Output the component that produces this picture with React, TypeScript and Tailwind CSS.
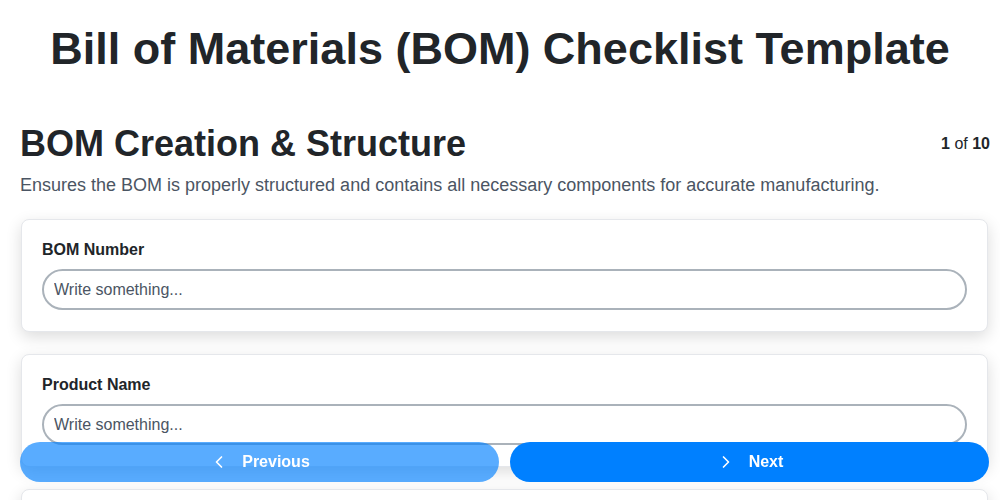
import { ChevronLeft, ChevronRight } from "lucide-react";

const fields = ["BOM Number", "Product Name", "Revision Level"];

function FieldCard({ label }: { label: string }) {
  return (
    <div className="bg-white border border-[#e5e7eb] rounded-lg px-5 pt-[22px] pb-[21px] shadow-[0_5px_16px_rgba(0,0,0,0.14)]">
      <label className="block text-base font-bold leading-none text-[#212529] mb-[11px]">{label}</label>
      <input
        type="text"
        placeholder="Write something..."
        className="w-full h-[41px] rounded-full border-2 border-[#aab2ba] px-[10px] text-base text-[#212529] placeholder-[#4b5563] bg-white focus:outline-none"
      />
    </div>
  );
}

export default function App() {
  return (
    <div className="min-h-screen bg-white text-[#212529] font-['Liberation_Sans',Arial,sans-serif]">
      <h1 className="text-center font-bold text-[45px] leading-[50px] pt-6">
        Bill of Materials (BOM) Checklist Template
      </h1>

      <div className="pl-5 pr-[10px] mt-[48px]">
        <div className="flex items-start justify-between">
          <h2 className="text-[36px] font-bold leading-[44px]">BOM Creation &amp; Structure</h2>
          <div className="text-base pt-[10px]">
            <span className="font-bold">1</span> of <span className="font-bold">10</span>
          </div>
        </div>
        <p className="text-[18px] leading-[26px] text-[#4b5563] mt-[6px]">
          Ensures the BOM is properly structured and contains all necessary components for accurate manufacturing.
        </p>

        <div className="flex flex-col gap-[22px] mt-[21px] pb-24 ml-px mr-[2px]">
          {fields.map((f) => (
            <FieldCard key={f} label={f} />
          ))}
        </div>
      </div>

      <div className="fixed bottom-[18px] left-5 right-[11px] flex gap-[11px]">
        <button className="flex-1 h-10 rounded-full bg-[#0080ff]/65 text-white font-bold text-base flex items-center justify-center gap-[13px]">
          <ChevronLeft size={20} strokeWidth={2} />
          Previous
        </button>
        <button className="flex-1 h-10 rounded-full bg-[#0080ff] text-white font-bold text-base flex items-center justify-center gap-[13px]">
          <ChevronRight size={20} strokeWidth={2} />
          Next
        </button>
      </div>
    </div>
  );
}
